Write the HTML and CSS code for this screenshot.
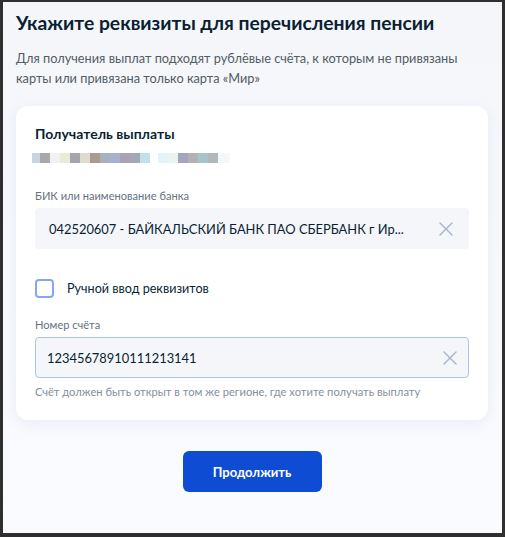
FILE: index.html
```html
<!DOCTYPE html>
<html lang="ru">
<head>
<meta charset="utf-8">
<link rel="stylesheet" href="styles.css">
</head>
<body>
<div class="frame">
  <h1 class="title">Укажите реквизиты для перечисления пенсии</h1>
  <p class="lead">Для получения выплат подходят рублёвые счёта, к которым не привязаны карты или привязана только карта «Мир»</p>
  <div class="card">
    <div class="recipient">Получатель выплаты</div>
    <div class="blur"><span class="blur-a"></span><span class="blur-b"></span></div>
    <div class="label label-bank">БИК или наименование банка</div>
    <div class="input">
      <span class="input-text">042520607 - БАЙКАЛЬСКИЙ БАНК ПАО СБЕРБАНК г Ир...</span>
      <svg class="clear" width="14" height="14" viewBox="0 0 14 14"><path d="M1 1L13 13M13 1L1 13" stroke="#a6b3cb" stroke-width="1.4" fill="none" stroke-linecap="round"/></svg>
    </div>
    <label class="check">
      <span class="box"></span>
      <span class="check-text">Ручной ввод реквизитов</span>
    </label>
    <div class="label">Номер счёта</div>
    <div class="input input-focus">
      <span class="input-text">12345678910111213141</span>
      <svg class="clear" width="14" height="14" viewBox="0 0 14 14"><path d="M1 1L13 13M13 1L1 13" stroke="#a6b3cb" stroke-width="1.4" fill="none" stroke-linecap="round"/></svg>
    </div>
    <div class="hint">Счёт должен быть открыт в том же регионе, где хотите получать выплату</div>
  </div>
  <div class="actions">
    <button class="btn">Продолжить</button>
  </div>
</div>
</body>
</html>
```

FILE: styles.css
```css
* { box-sizing: border-box; }
html, body { margin: 0; padding: 0; }
body {
  font-family: Lato, "Noto Sans", sans-serif;
  color: #0b1f33;
  background: #2f2f2f;
}
.frame {
  width: 505px;
  height: 537px;
  border-style: solid;
  border-color: #2f2f2f;
  border-width: 2px 3px 4px 3px;
  background: linear-gradient(#f4f6fa, #fafbfe);
  padding: 0 14px 0 13px;
  display: flex;
  flex-direction: column;
}
.title {
  margin: 7px 0 0;
  font-size: 19.3px;
  line-height: 28px;
  font-weight: 700;
  letter-spacing: 0;
}
.lead {
  margin: 11px 0 0;
  font-size: 12.75px;
  line-height: 20px;
  color: #535b63;
}
.card {
  margin-top: 18px;
  background: #fff;
  border-radius: 12px;
  box-shadow: 0 4px 14px rgba(160, 175, 210, 0.18);
  padding: 18px 19px 20px 19px;
  display: flex;
  flex-direction: column;
}
.recipient {
  font-size: 14px;
  line-height: 20px;
  font-weight: 700;
}
.blur {
  margin-top: 9px;
  height: 10px;
  display: flex;
  gap: 8px;
  margin-left: -3px;
}
.blur-a {
  width: 118px;
  height: 10px;
  background: linear-gradient(90deg,
    #c9d3e1 0 8px, #a9a9ad 8px 18px, #f1f1f3 18px 28px, #e7ebd7 28px 38px,
    #a7a5ab 38px 48px, #dcdccf 48px 58px, #a99c8f 58px 68px, #a9b0bb 68px 78px,
    #a9b1d0 78px 88px, #a9a1b4 88px 98px, #a1a9b5 98px 108px, #c1e0ec 108px 118px);
}
.blur-b {
  width: 72px;
  height: 10px;
  background: linear-gradient(90deg,
    #e3f3fa 0 10px, #eaf4ee 10px 20px, #a5a5c0 20px 30px, #b5b0b4 30px 40px,
    #a5c4cc 40px 50px, #b1b8bc 50px 60px, #f4f8f8 60px 72px);
}
.label {
  margin-top: 19px;
  font-size: 11.1px;
  line-height: 16px;
  color: #66727f;
}
.label-bank { margin-top: 25px; }
.input {
  margin-top: 4px;
  height: 41px;
  border-radius: 4px;
  background: #f4f6fa;
  border: 1px solid #f4f6fa;
  display: flex;
  align-items: center;
  justify-content: space-between;
  padding: 0 15px 0 13px;
}
.input-focus {
  border-color: #b3c3ef;
  padding-left: 11px;
  padding-right: 11px;
}
.input-text {
  font-size: 12.9px;
  line-height: 18px;
  color: #0b1f33;
}
.clear { flex: none; }
.check {
  margin-top: 30px;
  display: flex;
  align-items: center;
  gap: 13px;
}
.box {
  width: 19px;
  height: 19px;
  border: 2px solid #86a6ef;
  border-radius: 4px;
  background: #fff;
  flex: none;
}
.check-text {
  font-size: 12.6px;
  line-height: 18px;
}
.hint {
  margin-top: 6px;
  font-size: 11.2px;
  line-height: 16px;
  color: #86909c;
}
.actions {
  display: flex;
  justify-content: center;
  margin-top: 31px;
}
.btn {
  width: 139px;
  height: 41px;
  border: none;
  border-radius: 6px;
  background: #0d4cd3;
  color: #fff;
  font-family: Lato, "Noto Sans", sans-serif;
  font-size: 13px;
  font-weight: 700;
}
```
